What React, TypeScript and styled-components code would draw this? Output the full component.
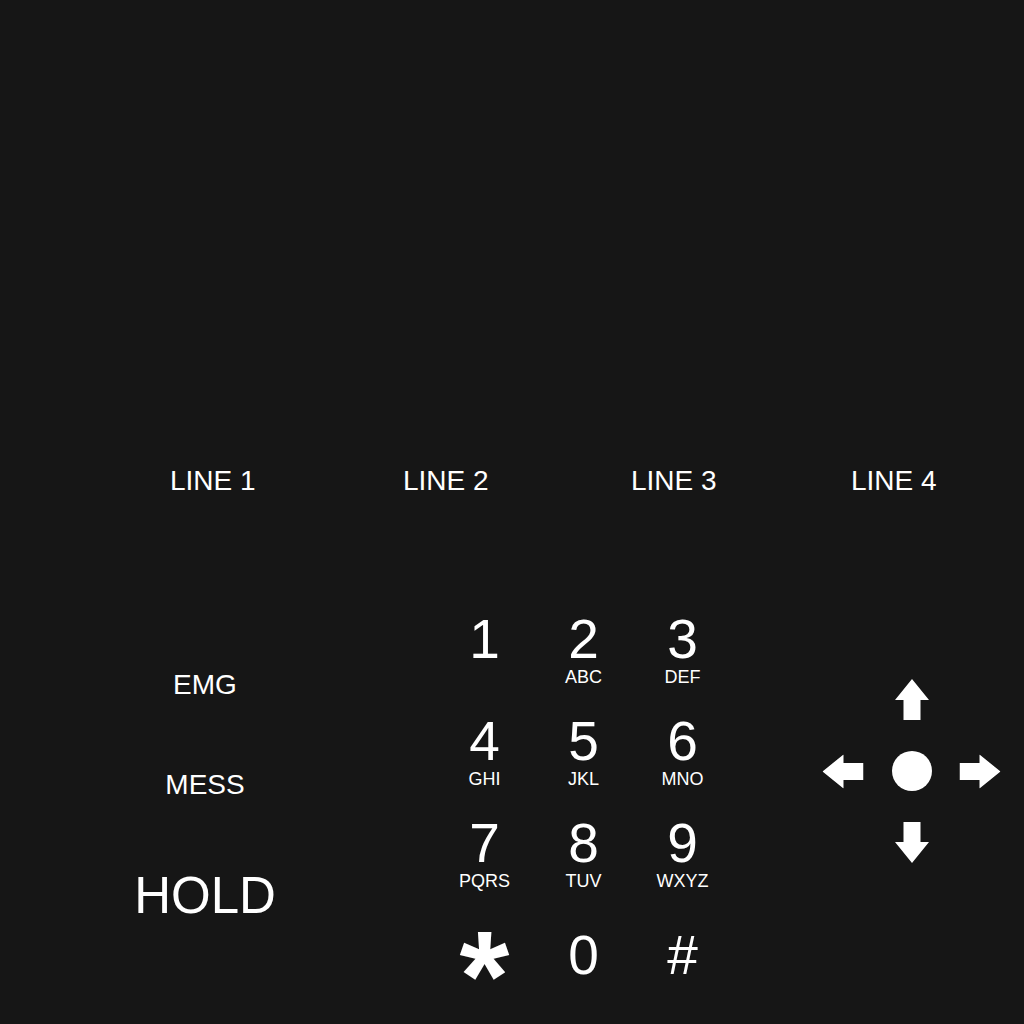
import * as React from "react";
import { createGlobalStyle, styled } from "styled-components";

const GlobalStyle = createGlobalStyle`
    html, body {
        margin: 0;
        padding: 0;
        background: #161616;
    }
`;

type Key = { digit: string; letters?: string; symbol?: boolean };

// "1" keeps an empty letters line so it sits level with 2 and 3.
const keys: Key[] = [
    { digit: "1", letters: "\u00a0" },
    { digit: "2", letters: "ABC" },
    { digit: "3", letters: "DEF" },
    { digit: "4", letters: "GHI" },
    { digit: "5", letters: "JKL" },
    { digit: "6", letters: "MNO" },
    { digit: "7", letters: "PQRS" },
    { digit: "8", letters: "TUV" },
    { digit: "9", letters: "WXYZ" },
    { digit: "*", symbol: true },
    { digit: "0" },
    { digit: "#" },
];

const lines = ["LINE 1", "LINE 2", "LINE 3", "LINE 4"];

const Page = styled.div`
    width: 1024px;
    height: 1024px;
    box-sizing: border-box;
    padding-top: 467px;
    background: #161616;
    color: #ffffff;
    font-family: "Liberation Sans", Arial, sans-serif;
    overflow: hidden;
`;

const LineRow = styled.div`
    display: grid;
    grid-template-columns: 233px 228px 220px auto;
    padding-left: 170px;
`;

const LineLabel = styled.div`
    font-size: 28px;
    line-height: 28px;
    white-space: nowrap;
`;

const Controls = styled.div`
    display: flex;
    align-items: flex-start;
    margin-top: 103px;
    padding-left: 105px;
`;

const SideColumn = styled.div`
    width: 200px;
    margin-top: 73px;
    display: flex;
    flex-direction: column;
    align-items: center;
    gap: 72px;
`;

const SideLabel = styled.div<{ $large?: boolean }>`
    font-size: ${(p) => (p.$large ? 51 : 28)}px;
    line-height: ${(p) => (p.$large ? 50 : 28)}px;
`;

const Keypad = styled.div`
    margin-left: 130px;
    display: grid;
    grid-template-columns: repeat(3, 99px);
    grid-auto-rows: 102px;
`;

const KeyCell = styled.div`
    display: flex;
    flex-direction: column;
    align-items: center;
    justify-content: center;
`;

const Digit = styled.div<{ $symbol?: boolean }>`
    height: 55px;
    font-size: ${(p) => (p.$symbol ? 128 : 55)}px;
    font-weight: ${(p) => (p.$symbol ? 700 : 400)};
    line-height: 55px;
    transform: ${(p) => (p.$symbol ? "translateY(20px)" : "none")};
`;

const Letters = styled.div`
    font-size: 18px;
    line-height: 18px;
    margin-top: 1px;
`;

const DPad = styled.div`
    margin-left: 77px;
    margin-top: 66px;
    display: grid;
    grid-template-columns: repeat(3, 68.5px);
    grid-template-rows: repeat(3, 71.5px);
    place-items: center;
`;

const Knob = styled.div`
    width: 40px;
    height: 40px;
    border-radius: 50%;
    background: #ffffff;
`;

const Arrow = ({ rotate }: { rotate: number }) => (
    <svg width="34" height="41" viewBox="0 0 34 41" style={{ transform: `rotate(${rotate}deg)` }}>
        <path d="M17 0 L34 21 L25.5 21 L25.5 41 L8.5 41 L8.5 21 L0 21 Z" fill="#ffffff" />
    </svg>
);

export default function App() {
    return (
        <Page>
            <GlobalStyle />
            <LineRow>
                {lines.map((l) => (
                    <LineLabel key={l}>{l}</LineLabel>
                ))}
            </LineRow>
            <Controls>
                <SideColumn>
                    <SideLabel>EMG</SideLabel>
                    <SideLabel>MESS</SideLabel>
                    <SideLabel $large>HOLD</SideLabel>
                </SideColumn>
                <Keypad>
                    {keys.map((k) => (
                        <KeyCell key={k.digit}>
                            <Digit $symbol={k.symbol}>{k.digit}</Digit>
                            {k.letters && <Letters>{k.letters}</Letters>}
                        </KeyCell>
                    ))}
                </Keypad>
                <DPad>
                    <span />
                    <Arrow rotate={0} />
                    <span />
                    <Arrow rotate={-90} />
                    <Knob />
                    <Arrow rotate={90} />
                    <span />
                    <Arrow rotate={180} />
                    <span />
                </DPad>
            </Controls>
        </Page>
    );
}
